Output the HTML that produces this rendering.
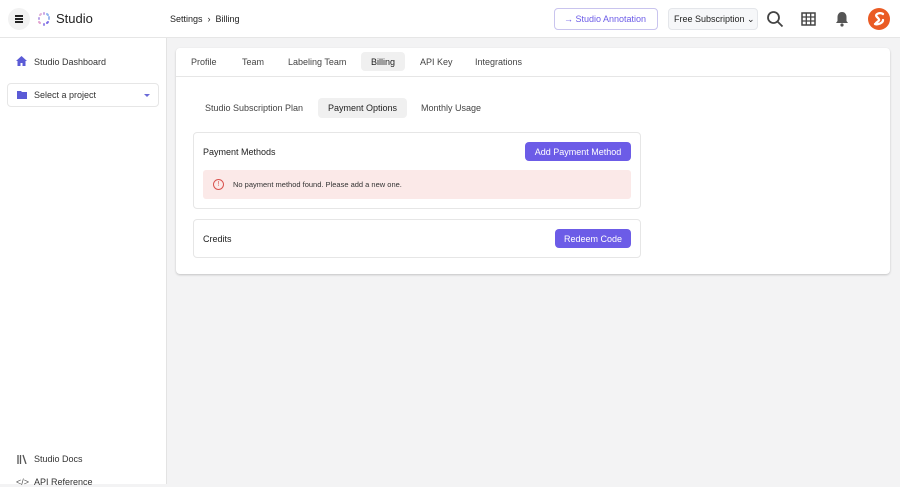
<!DOCTYPE html>
<html><head><style>
*{box-sizing:border-box;margin:0;padding:0}
body{width:900px;height:484px;overflow:hidden;font-family:"Liberation Sans",sans-serif;background:#f3f3f4;position:relative;color:#333}
.hdr{position:absolute;left:0;top:0;width:900px;height:38px;background:#fff;border-bottom:1px solid #e6e6e6}
.side{position:absolute;left:0;top:38px;width:167px;height:446px;background:#fff;border-right:1px solid #e3e3e3}
.abs{position:absolute}
.t{font-size:9px;color:#333}
.card{position:absolute;left:176px;top:48px;width:714px;height:226px;background:#fff;border-radius:4px;box-shadow:0 1px 2px rgba(0,0,0,.2)}
.btn{position:absolute;background:#6c5ce7;color:#fff;font-size:9px;border-radius:4px;text-align:center}
.box{position:absolute;border:1px solid #e6e6e6;border-radius:4px;background:#fff}
</style></head><body>
<div class="hdr">
 <div class="abs" style="left:8px;top:8px;width:22px;height:22px;border-radius:11px;background:#f2f2f2"></div>
 <div class="abs" style="left:15px;top:15px;width:8px;height:1.5px;background:#222;box-shadow:0 3px 0 #222,0 6px 0 #222"></div>
 <svg class="abs" style="left:37px;top:12px" width="14" height="14" viewBox="0 0 14 14"><g fill="none" stroke-width="2" stroke-linecap="round"><path d="M7 1v1" stroke="#c9a6e6"/><path d="M12 5v2" stroke="#9fb9ee"/><path d="M10 11l1 -1" stroke="#7c6de6"/><path d="M3 11l-1-1" stroke="#e2a2cf"/><path d="M2 6v1" stroke="#b9a3e8"/><path d="M10 2l1 1" stroke="#8fb5ef"/><path d="M4 2l-1 1" stroke="#e3b2d6"/><path d="M7 13v-1" stroke="#9a8ae8"/></g></svg>
 <div class="abs" style="left:56px;top:11px;font-size:13px;color:#222">Studio</div>
 <div class="abs t" style="left:170px;top:14px;color:#222">Settings &nbsp;›&nbsp; Billing</div>
 <div class="abs" style="left:554px;top:8px;width:104px;height:22px;border:1px solid #c9c4ee;border-radius:4px;font-size:9px;color:#6c5ce7;padding:5px 0 0 9px">→ Studio Annotation</div>
 <div class="abs" style="left:668px;top:8px;width:90px;height:22px;border:1px solid #e4e6ea;background:#f6f7f9;border-radius:4px;font-size:9px;color:#222;padding:5px 0 0 5px">Free Subscription ⌄</div>
 <svg class="abs" style="left:766px;top:10px" width="18" height="18" viewBox="0 0 18 18"><circle cx="7.5" cy="7.5" r="5.5" fill="none" stroke="#444" stroke-width="1.8"/><path d="M11.5 11.5l5 5" stroke="#444" stroke-width="1.8"/></svg>
 <svg class="abs" style="left:801px;top:12px" width="15" height="14" viewBox="0 0 15 14"><rect x="1" y="1" width="13" height="12" fill="none" stroke="#444" stroke-width="1.5"/><path d="M1 5h13M1 9h13M5.3 1v12M9.7 1v12" stroke="#444" stroke-width="1.3"/></svg>
 <svg class="abs" style="left:835px;top:11px" width="14" height="16" viewBox="0 0 14 16"><path d="M7 1c-3 0-4.5 2.5-4.5 5v4L1 12h12l-1.5-2V6C11.5 3.5 10 1 7 1z" fill="#555"/><circle cx="7" cy="14" r="1.6" fill="#555"/></svg>
 <div class="abs" style="left:868px;top:8px;width:22px;height:22px;border-radius:11px;background:#ea5b24"></div>
 <svg class="abs" style="left:868px;top:8px" width="22" height="22" viewBox="0 0 22 22"><path d="M15 6c-3-2-9 0-6 3s3 3-1 6M7 16c3 1 8-1 8-4" fill="none" stroke="#fff" stroke-width="2.3" stroke-linecap="round"/></svg>
</div>
<div class="side">
 <svg class="abs" style="left:16px;top:18px" width="11" height="10" viewBox="0 0 11 10"><path d="M5.5 0L0 5h1.5v5h3V7h2v3h3V5H11z" fill="#5b5bd6"/></svg>
 <div class="abs t" style="left:34px;top:19px">Studio Dashboard</div>
 <div class="abs" style="left:7px;top:45px;width:152px;height:24px;border:1px solid #e6e6e6;border-radius:4px"></div>
 <svg class="abs" style="left:17px;top:52px" width="10" height="9" viewBox="0 0 10 9"><path d="M0 1h4l1 1h5v7H0z" fill="#5b5bd6"/></svg>
 <div class="abs t" style="left:34px;top:52px">Select a project</div>
 <div class="abs" style="left:144px;top:56px;border-left:3px solid transparent;border-right:3px solid transparent;border-top:3px solid #6a6ad8"></div>
 <svg class="abs" style="left:17px;top:416px" width="10" height="10" viewBox="0 0 10 10"><path d="M1 1v9M3.5 1v9M6 1l3 9" stroke="#555" stroke-width="1.3" fill="none"/></svg>
 <div class="abs t" style="left:34px;top:416px">Studio Docs</div>
 <div class="abs t" style="left:16px;top:439px;color:#555">&lt;/&gt;</div>
 <div class="abs t" style="left:34px;top:439px">API Reference</div>
</div>
<div class="card">
 <div class="abs" style="left:0;top:28px;width:714px;height:1px;background:#e6e6e6"></div>
 <div class="abs t" style="left:15px;top:9px;color:#444">Profile</div>
 <div class="abs t" style="left:66px;top:9px;color:#444">Team</div>
 <div class="abs t" style="left:112px;top:9px;color:#444">Labeling Team</div>
 <div class="abs" style="left:185px;top:4px;width:44px;height:19px;background:#f0f0f0;border-radius:4px"></div>
 <div class="abs t" style="left:195px;top:9px;color:#222">Billing</div>
 <div class="abs t" style="left:244px;top:9px;color:#444">API Key</div>
 <div class="abs t" style="left:299px;top:9px;color:#444">Integrations</div>
 <div class="abs t" style="left:29px;top:55px;color:#444">Studio Subscription Plan</div>
 <div class="abs" style="left:142px;top:50px;width:89px;height:20px;background:#f0f0f0;border-radius:4px"></div>
 <div class="abs t" style="left:152px;top:55px;color:#222">Payment Options</div>
 <div class="abs t" style="left:245px;top:55px;color:#444">Monthly Usage</div>
 <div class="box" style="left:17px;top:84px;width:448px;height:77px"></div>
 <div class="abs t" style="left:27px;top:99px;color:#222">Payment Methods</div>
 <div class="btn" style="left:349px;top:94px;width:106px;height:19px;padding-top:5px">Add Payment Method</div>
 <div class="abs" style="left:27px;top:122px;width:428px;height:29px;background:#fbe9e8;border-radius:3px"></div>
 <div class="abs" style="left:37px;top:131px;width:11px;height:11px;border:1.3px solid #d9534f;border-radius:6px;font-size:7px;color:#d9534f;text-align:center;line-height:9px">!</div>
 <div class="abs" style="left:57px;top:132px;font-size:7.5px;color:#333">No payment method found. Please add a new one.</div>
 <div class="box" style="left:17px;top:171px;width:448px;height:39px"></div>
 <div class="abs t" style="left:27px;top:186px;color:#222">Credits</div>
 <div class="btn" style="left:379px;top:181px;width:76px;height:19px;padding-top:5px">Redeem Code</div>
</div>
</body></html>
